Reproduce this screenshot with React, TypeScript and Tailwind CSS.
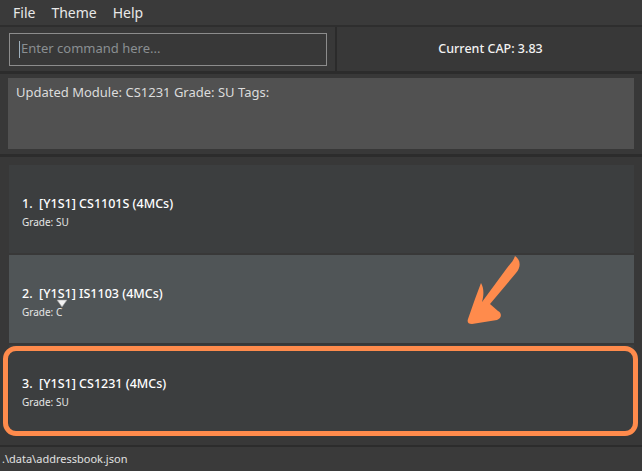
import React from 'react';

const modules = [
    { idx: 1, sem: 'Y1S1', code: 'CS1101S', mcs: 4, grade: 'SU', odd: false },
    { idx: 2, sem: 'Y1S1', code: 'IS1103', mcs: 4, grade: 'C', odd: true },
    { idx: 3, sem: 'Y1S1', code: 'CS1231', mcs: 4, grade: 'SU', odd: false },
];

function ModuleCard({ m }: { m: (typeof modules)[number] }) {
    return (
        <div className={`relative h-[88px] flex flex-col justify-center pl-[13px] pt-[6px] ${m.odd ? 'bg-[#505557]' : 'bg-[#3c3e3f]'}`}>
            <div className="text-[12.5px] font-medium text-white leading-[18px]">
                {m.idx}.&nbsp;&nbsp;[{m.sem}] {m.code} ({m.mcs}MCs)
            </div>
            <div className="text-[10px] text-[#e6e6e6] leading-[14px] mt-[2px]">Grade: {m.grade}</div>
            {m.idx === 2 && (
                <svg className="absolute left-[46px] top-[43px]" width="14" height="12" viewBox="0 0 14 12">
                    <path d="M2 2 L12 2 L7 9 Z" fill="#f2f2f2" stroke="#9a9a9a" strokeWidth="0.6" />
                </svg>
            )}
            {m.idx === 3 && (
                <div className="absolute left-[-6px] right-[-4px] top-[1px] bottom-[-3px] border-[5px] border-[#ff8b4c] rounded-[13px] pointer-events-none" />
            )}
        </div>
    );
}

export default function App() {
    return (
        <div
            className="relative w-[642px] h-[471px] bg-[#383838] flex flex-col overflow-hidden text-[#f0f0f0]"
            style={{ fontFamily: '"Noto Sans", "Open Sans", sans-serif' }}
        >
            {/* menu */}
            <div className="h-[25px] flex items-center gap-[16px] pl-[13px] pb-[1px] text-[14px] text-[#e8e8e8] bg-[#3a3a3a]">
                <span>File</span>
                <span>Theme</span>
                <span>Help</span>
            </div>
            <div className="h-[2px] bg-[#2e2e2e]" />

            {/* command + cap */}
            <div className="h-[44px] flex">
                <div className="w-[335px] flex items-center pl-[9px] pr-[8px]">
                    <div className="w-full h-[33px] border border-[#8c8c8c] flex items-center pl-[9px] text-[13px] text-[#8a8f92]">
                        <span className="w-[1px] h-[17px] bg-[#9fb0bd] mr-[1px]" />
                        Enter command here...
                    </div>
                </div>
                <div className="w-[2px] bg-[#2b2b2b]" />
                <div className="flex-1 flex items-center justify-center text-[12.5px] font-medium text-[#f2f2f2] pl-[2px]">
                    Current CAP: 3.83
                </div>
            </div>
            <div className="h-[3px] bg-[#2c2c2c]" />

            {/* result display */}
            <div className="h-[80px] px-[8px] pt-[4px] pb-[5px]">
                <div className="h-full bg-[#515151] pl-[8px] pt-[5px] text-[13px] text-[#dcdcdc]">
                    Updated Module: CS1231 Grade: SU Tags:
                </div>
            </div>
            <div className="h-[3px] bg-[#2c2c2c]" />

            {/* list */}
            <div className="flex-1 pl-[9px] pr-[8px] pt-[8px] flex flex-col gap-[2px]">
                {modules.map((m) => (
                    <ModuleCard key={m.idx} m={m} />
                ))}
            </div>

            {/* status */}
            <div className="h-[2px] bg-[#2c2c2c]" />
            <div className="h-[24px] flex items-center pl-[2px] text-[11px] text-[#e0e0e0] bg-[#3a3a3a]">
                .\data\addressbook.json
            </div>

            {/* annotation arrow */}
            <svg className="absolute left-0 top-0 pointer-events-none" width="642" height="471">
                <path
                    d="M515 256 C521 260 521 267 516 273 L490 304 L498 311 C502 313 502 318 497 320 L472 324 C468 324 467 322 468 319 L475 299 L481 283 C484 288 484 295 482 302 L507 268 C511 263 514 260 515 256 Z"
                    fill="#ff8b4c"
                />
            </svg>
        </div>
    );
}
